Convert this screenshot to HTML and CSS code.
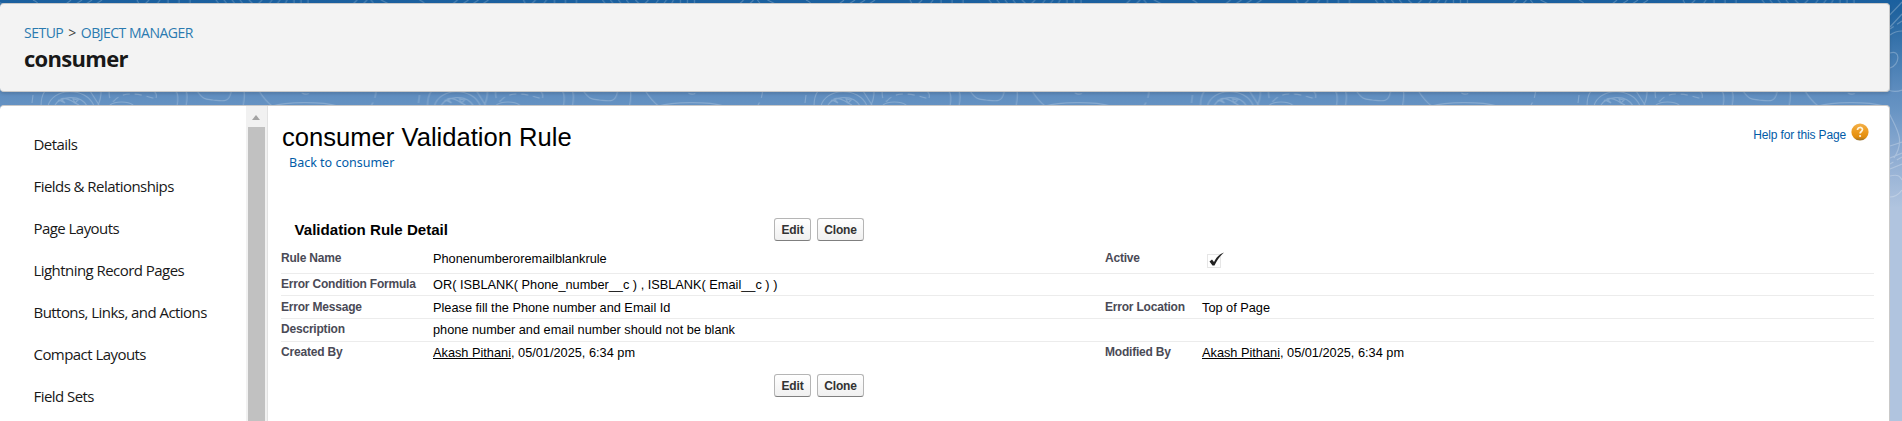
FILE: index.html
```html
<!DOCTYPE html>
<html lang="en">
<head>
<meta charset="utf-8">
<title>consumer Validation Rule</title>
<link rel="stylesheet" href="styles.css">
</head>
<body>
<svg class="backdrop" width="1902" height="421" aria-hidden="true">
  <defs>
    <pattern id="topo" x="30" y="0" width="386.5" height="421" patternUnits="userSpaceOnUse">
      <g fill="none" stroke="#fff" stroke-opacity=".22" stroke-width="1.1" transform="translate(-30 0)">
        <path d="M33 95l-1 8M41 106c0-6 1-11 4-15M48 106c4-18 38-20 46 0M55 105c4-8 25-12 32 1M56 104l3-4 6 3-4-4c3-2 10 1 14 4l-2-4 5 1-3 3 4 2M90 91l9 14M101 91c0 6-1 10-3 14M176 91c3 5 2 10 1 15M186 91c2 5 1 10 0 15M197 91c7 10 10 8 16 9 10 1 16 3 18-8M244 91c1 6 0 10-1 15M259 91c5 8 8 11 13 15 14-4 48-5 66 0M110 105c5-4 18-4 23 0"/>
        <path stroke-dasharray="7 5" d="M109 91c0 6 1 12 5 10 8-10 24-8 42-2M156 98c1-3 0-5-2-7M302 93c3 2 7 1 9-1M376 91c0 5-2 10-5 15"/>
        <path d="M33 0c4 2 5 3 5 4M66 4l5-4M76 4l6-4M86 4l6-4M96 4l6-4M137 0l2 4M145 4l4-4M157 4l3-4M168 4V0M179 4V0M190 4V0M216 0l3 4M224 0l3 4M232 0l3 4M240 0l3 4M249 0l4 4M258 4l4-4M269 4l3-4M277 4l3-4M285 4l2-4M294 4V0M301 4V0M308 4V0M353 4l4-4M363 4l4-4M371 0l3 4M381 0l8 4"/>
      </g>
    </pattern>
  </defs>
  <rect width="1888" height="108" fill="url(#topo)"/>
  <g fill="none" stroke="#fff" stroke-opacity=".25" stroke-width="1.2">
    <path d="M1902 2c-6 7-9 9-13 14M1902 14l-12 13M1890 35c4-3 8-4 12-4M1890 53c11-4 10 12 0 15M1888 90c5 2 9 2 14 0M1889 113c7 15 17 27 5 45M1902 142l-12 4M1902 153l-12 5M1902 164l-12 5M1890 176c8-2 10 0 12 4M1890 197c6 0 9-3 12-7"/>
    <path stroke-dasharray="6 4" d="M1902 21l-12 8M1902 157l-12 7"/>
  </g>
</svg>
<div class="page">
  <header class="header">
    <nav class="crumbs"><a>SETUP</a><span class="sep">&gt;</span><a>OBJECT MANAGER</a></nav>
    <h1 class="object-name">consumer</h1>
  </header>
  <main class="panel">
    <nav class="sidebar">
      <a>Details</a>
      <a>Fields &amp; Relationships</a>
      <a>Page Layouts</a>
      <a>Lightning Record Pages</a>
      <a>Buttons, Links, and Actions</a>
      <a>Compact Layouts</a>
      <a>Field Sets</a>
    </nav>
    <div class="scrollbar"><span class="arrow"></span><span class="thumb"></span></div>
    <section class="content">
      <div class="title-row">
        <div>
          <h2 class="title">consumer Validation Rule</h2>
          <a class="back">Back to consumer</a>
        </div>
        <a class="help"><span>Help for this Page</span>
          <svg width="18" height="18" viewBox="0 0 18 18">
            <defs><linearGradient id="orb" x1="0" y1="0" x2="0" y2="1"><stop offset="0" stop-color="#f3b04a"/><stop offset=".5" stop-color="#ec9a1c"/><stop offset=".8" stop-color="#e28c0c"/><stop offset="1" stop-color="#94702e"/></linearGradient></defs>
            <circle cx="9" cy="9" r="8.6" fill="url(#orb)"/>
            <path d="M6.5 7c0-3.3 5-3.3 5-.4 0 1.9-2.4 1.9-2.4 4" fill="none" stroke="#fff3dc" stroke-width="1.7"/>
            <circle cx="9.1" cy="13" r="1.1" fill="#fff3dc"/>
          </svg>
        </a>
      </div>
      <div class="detail-head">
        <h3 class="detail-title">Validation Rule Detail</h3>
        <div class="buttons"><button class="edit">Edit</button><button class="clone">Clone</button></div>
      </div>
      <div class="rows">
        <div class="row first"><span class="label">Rule Name</span><span class="value">Phonenumberoremailblankrule</span><span class="label">Active</span><span class="value">
          <svg class="check" width="19" height="17" viewBox="0 0 19 17"><rect x="1.5" y="2.5" width="13" height="13" fill="none" stroke="#ccc" stroke-dasharray="1 1"/><path d="M3.500 9.500l2.500-2L8 10C10 6 13 2 18 .5 14 4 11 8 8.500 13.500H6.500Z" fill="#222"/></svg></span></div>
        <div class="row second"><span class="label">Error Condition Formula</span><span class="value">OR( ISBLANK( Phone_number__c ) , ISBLANK( Email__c ) )</span></div>
        <div class="row"><span class="label">Error Message</span><span class="value">Please fill the Phone number and Email Id</span><span class="label">Error Location</span><span class="value">Top of Page</span></div>
        <div class="row fourth"><span class="label">Description</span><span class="value">phone number and email number should not be blank</span></div>
        <div class="row last"><span class="label">Created By</span><span class="value"><u>Akash Pithani</u>, 05/01/2025, 6:34 pm</span><span class="label">Modified By</span><span class="value"><u>Akash Pithani</u>, 05/01/2025, 6:34 pm</span></div>
      </div>
      <div class="buttons bottom"><button class="edit">Edit</button><button class="clone">Clone</button></div>
    </section>
  </main>
</div>
</body>
</html>
```
FILE: styles.css
```css
* { box-sizing: border-box; }
body {
  margin: 0;
  height: 421px;
  overflow: hidden;
  background: linear-gradient(#1a609f 0, #20639f 12px, #4a80b5 65px, #5f8dbf 92px, #6693c3 108px, #8eacd2 155px, #b0c4df 208px, #b0c4df 100%);
  font-family: "Liberation Sans", Arial, sans-serif;
  font-size: 12px;
  color: #000;
}
.backdrop { position: absolute; left: 0; top: 0; }
.page { position: relative; display: flex; flex-direction: column; gap: 13px; width: 1890px; padding-top: 3px; }
.header {
  height: 89px;
  padding: 19px 24px 0;
  background: #f3f3f3;
  border: 1px solid #c9c9c9;
  border-left: 0;
  border-radius: 4px;
  box-shadow: 0 2px 3px rgba(0, 0, 0, .12);
}
.crumbs { display: flex; font: 14px/20px "Open Sans", sans-serif; color: #2a7ab0; letter-spacing: -.5px; white-space: nowrap; }
.crumbs .sep { color: #444; margin: 0 5px; }
.object-name { margin: 1px 0 0; font: bold 22px/28px "Open Sans", sans-serif; color: #181818; letter-spacing: -.7px; }
.panel { display: flex; height: 330px; background: #fff; border: 1px solid #c9c9c9; border-left: 0; border-radius: 4px 4px 0 0; }
.sidebar { display: flex; flex-direction: column; width: 246px; padding: 17px 0 0 33.500px; font: 15px/42px "Open Sans", sans-serif; letter-spacing: -.55px; color: #181818; white-space: nowrap; }
.sidebar a { height: 42px; }
.scrollbar { display: flex; flex-direction: column; width: 22px; padding-left: 2px; background: #f1f1f1; border-right: 1px solid #e2e2e2; }
.arrow { margin: 9px 0 7px 4px; width: 0; height: 0; border: 4.500px solid transparent; border-top: 0; border-bottom: 5px solid #a3a3a3; }
.thumb { width: 17px; flex: 1; background: #c1c1c1; }
.content { flex: 1; padding: 17px 15px 0 13px; }
.title-row { display: flex; justify-content: space-between; height: 92px; padding-right: 5px; }
.title { margin: 0 0 0 1px; font-weight: normal; font-size: 25.600px; line-height: 28px; white-space: nowrap; }
.back { display: block; margin: 4px 0 0 8px; font: 12.500px/16px "Noto Sans", sans-serif; color: #015ba7; }
.help { display: flex; align-items: flex-start; gap: 5px; color: #015ba7; line-height: 24px; letter-spacing: -.15px; white-space: nowrap; }
.detail-head { display: flex; height: 35px; }
.detail-title { width: 493px; margin: 0; padding-left: 13.500px; font-size: 15.100px; line-height: 30px; white-space: nowrap; }
.buttons { display: flex; gap: 6px; padding-top: 3px; }
button { height: 23px; padding: 0; font: bold 12px/18px "Liberation Sans", Arial, sans-serif; letter-spacing: -.2px; color: #333; border: 1px solid #b5b5b5; border-bottom-color: #7f7f7f; border-radius: 3px; background: linear-gradient(#fff, #f0f0f0); }
.edit { width: 37px; }
.clone { width: 47px; }
.row { display: grid; grid-template-columns: 152px 672px 97px 1fr; height: 23px; border-bottom: 1px solid #ececec; line-height: 14px; padding-top: 4px; white-space: nowrap; }
.row.first { height: 24px; padding-top: 1px; }
.row.second { height: 22px; padding-top: 3px; }
.row.fourth { padding-top: 3px; }
.row.last { border: 0; padding-top: 3px; }
.label { font-weight: bold; color: #4a4a56; letter-spacing: -.2px; }
.value { padding-top: 1px; font-size: 12.750px; }
.check { display: block; margin: 0 0 0 4px; }
.bottom { margin: 9px 0 0 493px; padding: 0; }
```
